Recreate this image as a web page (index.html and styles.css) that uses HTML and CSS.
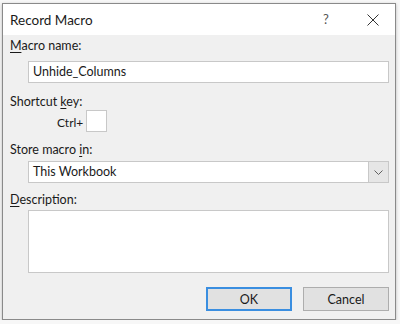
FILE: index.html
```html
<!DOCTYPE html>
<html lang="en">
<head>
  <meta charset="UTF-8">
  <title>Record Macro</title>
  <link rel="stylesheet" href="styles.css">
</head>
<body>
  <div class="dialog">
    <div class="titlebar">
      <span class="title">Record Macro</span>
      <span class="help">?</span>
      <span class="close">
        <svg width="12" height="12" viewBox="0 0 12 12"><path d="M0.5 0.5 L11.5 11.5 M11.5 0.5 L0.5 11.5" stroke="#333" stroke-width="1" fill="none"/></svg>
      </span>
    </div>
    <div class="content">
      <div class="label first"><u>M</u>acro name:</div>
      <div class="field text">Unhide_Columns</div>

      <div class="label">Shortcut <u>k</u>ey:</div>
      <div class="shortcut">
        <span>Ctrl+</span>
        <div class="keybox"></div>
      </div>

      <div class="label">Store macro <u>i</u>n:</div>
      <div class="field select">
        <span class="value">This Workbook</span>
        <span class="arrow">
          <svg width="9" height="5" viewBox="0 0 9 5"><path d="M0.5 0.5 L4.5 4.5 L8.5 0.5" stroke="#606060" stroke-width="1" fill="none"/></svg>
        </span>
      </div>

      <div class="label"><u>D</u>escription:</div>
      <div class="field area"></div>

      <div class="buttons">
        <button class="btn primary">OK</button>
        <button class="btn">Cancel</button>
      </div>
    </div>
  </div>
</body>
</html>
```

FILE: styles.css
```css
* {
  box-sizing: border-box;
  margin: 0;
  padding: 0;
}
body {
  background: #f7f7f7;
  font-family: Lato, "Noto Sans", Arial, sans-serif;
  font-size: 12.5px;
  color: #1a1a1a;
  padding: 3px 0 0 2px;
}
.dialog {
  width: 394px;
  height: 317px;
  border: 1px solid #8a8a8a;
  background: #f0f0f0;
  box-shadow: 0 1px 3px rgba(0, 0, 0, 0.25);
}
.titlebar {
  height: 31px;
  background: #fff;
  display: flex;
  align-items: center;
  padding-left: 7px;
}
.title {
  font-size: 13.5px;
  flex: 1;
}
.help {
  font-size: 13px;
  color: #555;
  width: 50px;
  text-align: center;
  margin-top: -2px;
}
.close {
  width: 44px;
  display: flex;
  justify-content: center;
  padding-top: 1px;
}
.content {
  padding: 3px 7px 0 7px;
}
.label {
  height: 16px;
  line-height: 16px;
}
.label u {
  text-decoration-thickness: 1px;
  text-underline-offset: 2px;
}
.field {
  background: #fff;
  border: 1px solid #c8c8c8;
  margin-left: 18px;
  width: 361px;
}
.text {
  height: 22px;
  line-height: 20px;
  padding-left: 4px;
  margin-top: 7px;
  margin-bottom: 11px;
}
.shortcut {
  display: flex;
  align-items: center;
  margin: 0 0 10px 47px;
  gap: 4px;
}
.shortcut span {
  padding-top: 2px;
  font-size: 12px;
  width: 25px;
  white-space: nowrap;
}
.keybox {
  width: 21px;
  height: 22px;
  background: #fff;
  border: 1px solid #c8c8c8;
}
.select {
  height: 22px;
  display: flex;
  margin-top: 3px;
  margin-bottom: 9px;
}
.select .value {
  flex: 1;
  line-height: 20px;
  padding-left: 4px;
}
.select .arrow {
  width: 20px;
  background: #e6e6e6;
  border-left: 1px solid #c8c8c8;
  display: flex;
  align-items: center;
  justify-content: center;
}
.area {
  height: 63px;
  margin-top: 2px;
}
.buttons {
  display: flex;
  justify-content: flex-end;
  gap: 11px;
  margin-top: 14px;
  width: 379px;
}
.btn {
  width: 86px;
  height: 24px;
  background: #e1e1e1;
  border: 1px solid #adadad;
  font-family: inherit;
  font-size: 12.5px;
  color: #1a1a1a;
}
.btn.primary {
  border: 2px solid #3a8ee0;
}
```
